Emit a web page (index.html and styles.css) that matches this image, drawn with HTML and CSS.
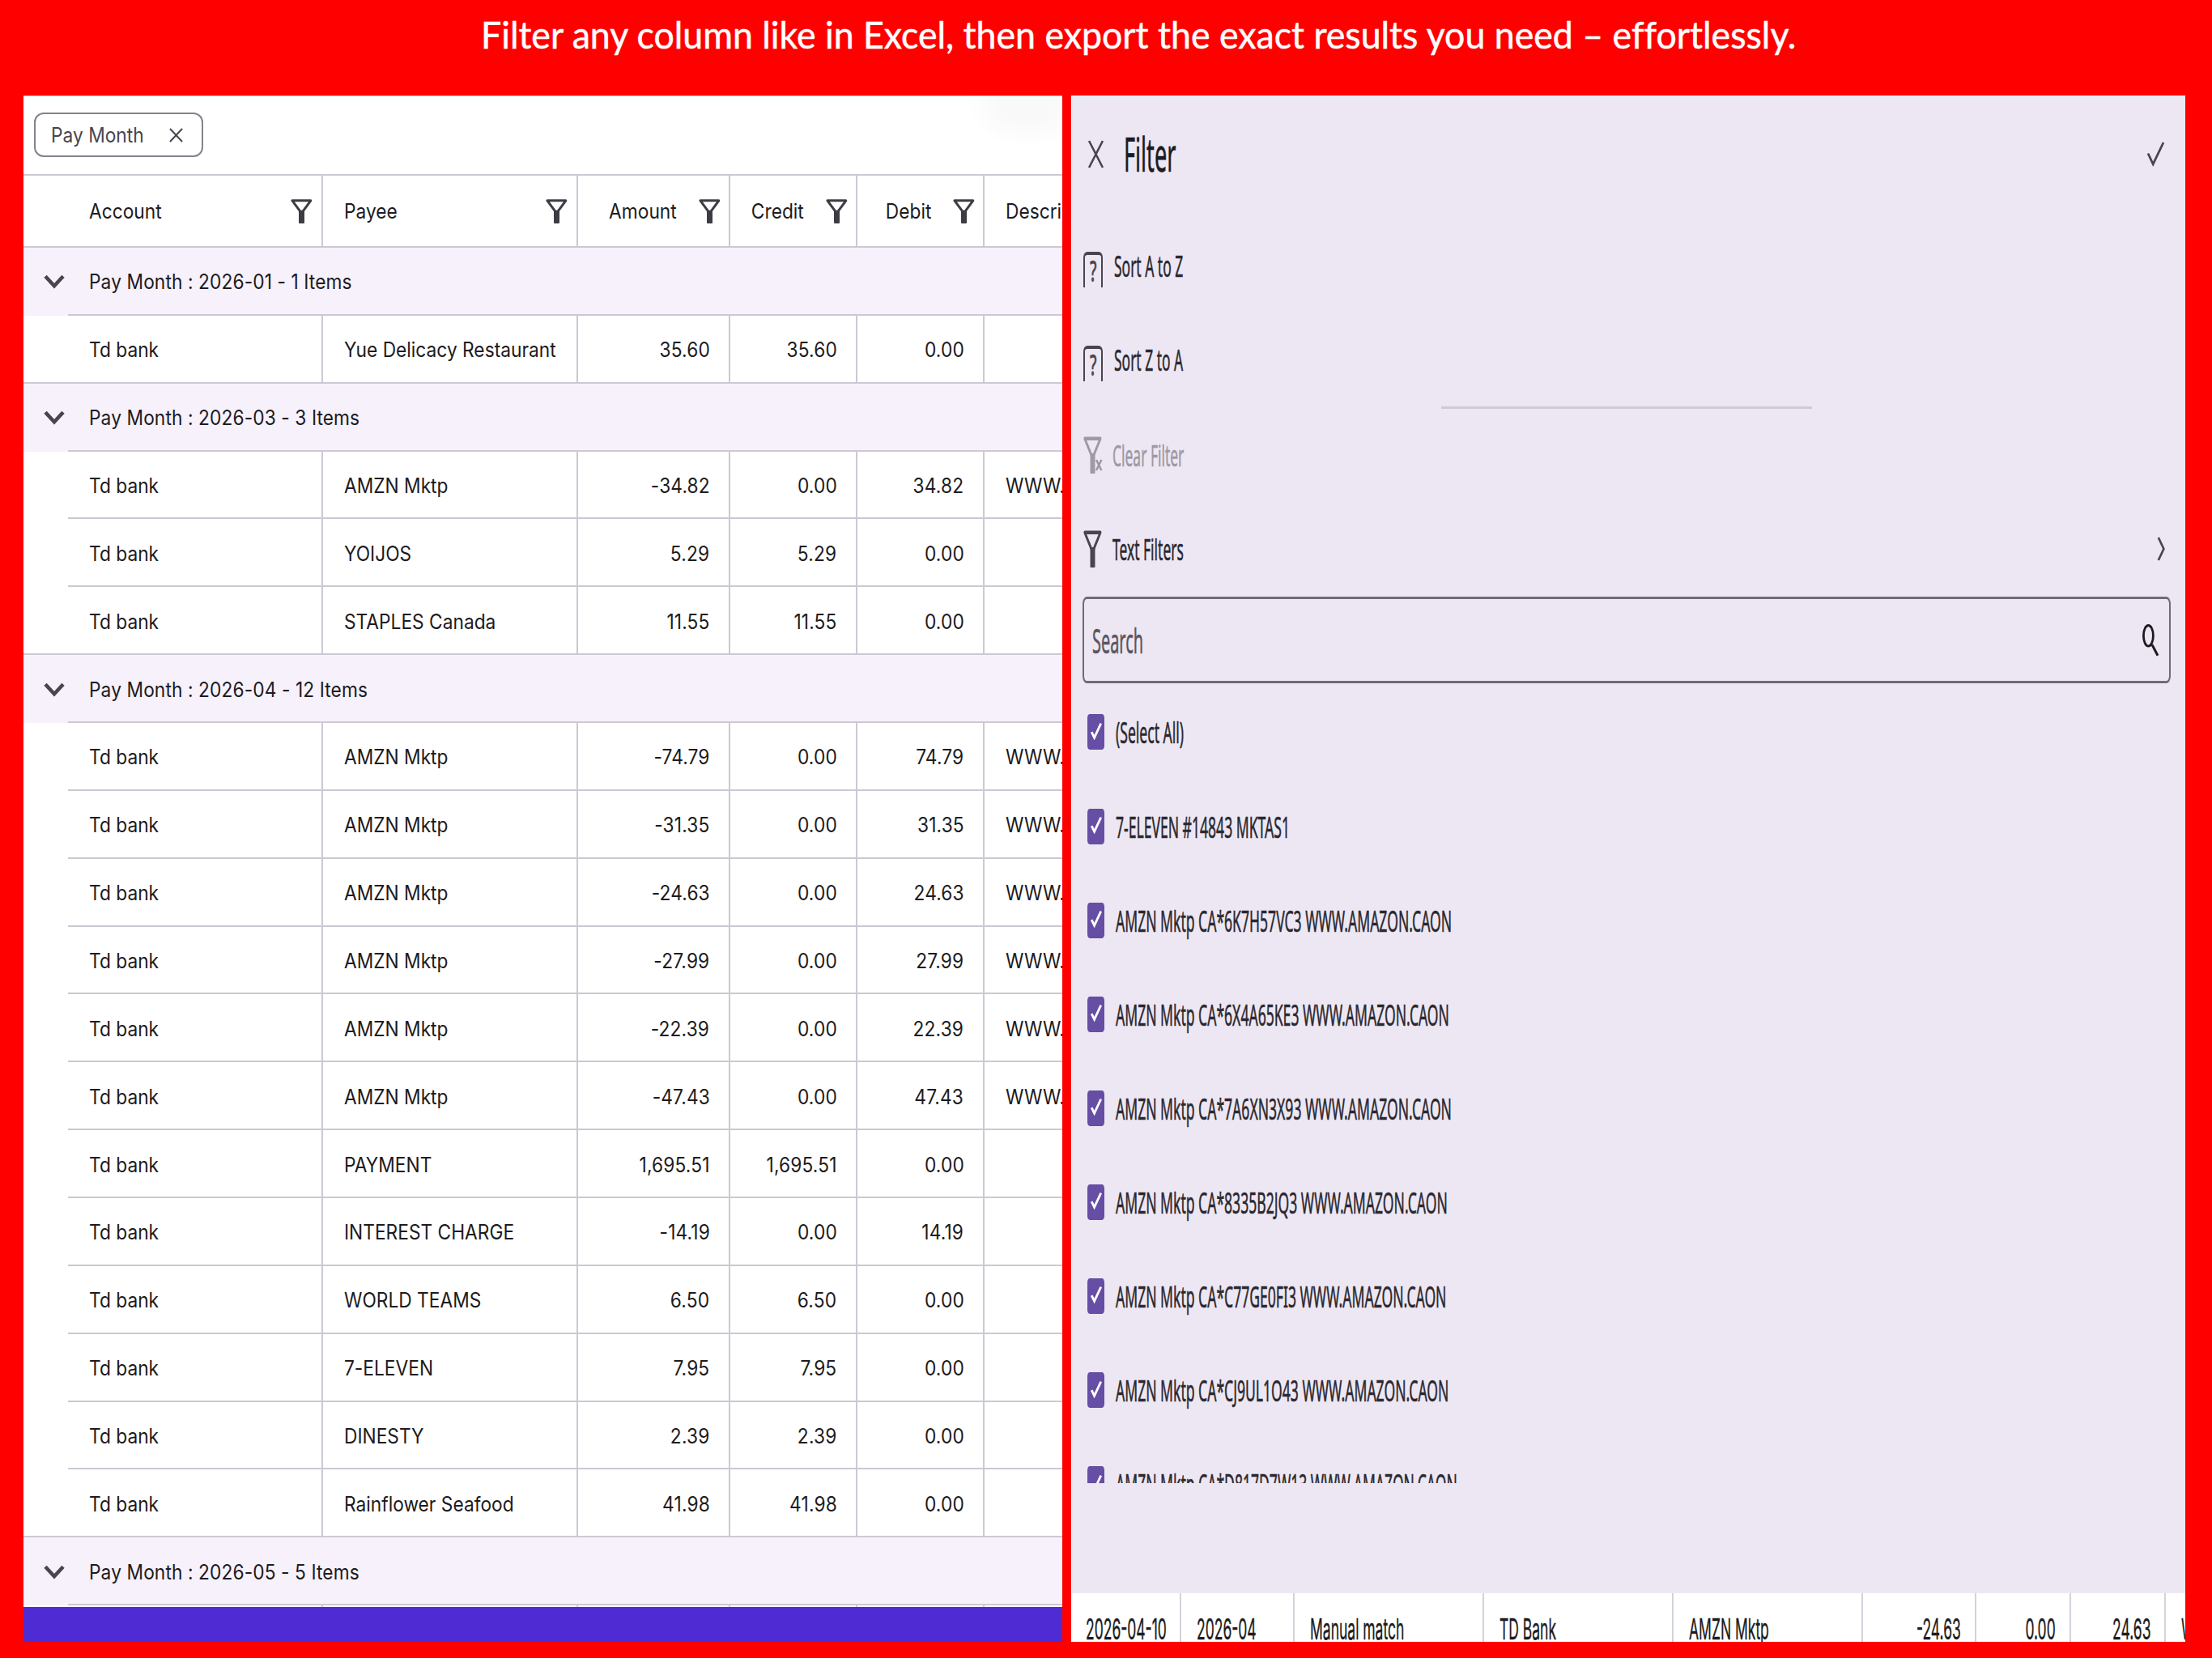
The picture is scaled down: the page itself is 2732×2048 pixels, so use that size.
FILE: index.html
```html
<!DOCTYPE html>
<html lang="en">
<head>
<meta charset="utf-8">
<title>Filter any column</title>
<link rel="stylesheet" href="styles.css">
</head>
<body>
<svg class="defs" aria-hidden="true">
  <symbol id="funnel" viewBox="0 0 27 30" preserveAspectRatio="none"><path d="M2 1.8H24.8L15 15.2H11.8Z" fill="none" stroke="currentColor" stroke-width="3" stroke-linejoin="round"/><path d="M10 14H17V29Q17 30 16 30H11Q10 30 10 29Z" fill="currentColor"/></symbol>
  <symbol id="close" viewBox="0 0 18 18" preserveAspectRatio="none"><path d="M1 1L17 17M17 1L1 17" fill="none" stroke="currentColor" vector-effect="non-scaling-stroke"/></symbol>
  <symbol id="down" viewBox="0 0 26 18"><path d="M2 2.2L13 14.2L24 2.2" fill="none" stroke="currentColor" stroke-width="4.6"/></symbol>
  <symbol id="tick" viewBox="0 0 14 22" preserveAspectRatio="none"><path d="M1.2 12.2L4.6 19.2L12.8 1.6" fill="none" stroke="#fff" stroke-width="2.8"/></symbol>
</svg>

<h1 class="headline"><span class="t">Filter any column like in Excel, then export the exact results you need – effortlessly.</span></h1>

<main class="stage">
  <section class="grid-panel">
    <div class="chips">
      <div class="chip"><span class="t">Pay Month</span><svg class="chip-x"><use href="#close"/></svg></div>
    </div>
    <div class="row head">
      <i class="gutter"></i>
      <div class="cell"><span class="t">Account</span><svg class="funnel"><use href="#funnel"/></svg></div>
      <div class="cell"><span class="t">Payee</span><svg class="funnel"><use href="#funnel"/></svg></div>
      <div class="cell num"><span class="t">Amount</span><svg class="funnel"><use href="#funnel"/></svg></div>
      <div class="cell num"><span class="t">Credit</span><svg class="funnel"><use href="#funnel"/></svg></div>
      <div class="cell num"><span class="t">Debit</span><svg class="funnel"><use href="#funnel"/></svg></div>
      <div class="cell"><span class="t">Descri</span></div>
    </div>

    <div class="group"><i class="gutter"><svg class="down"><use href="#down"/></svg></i><div class="cell"><span class="t">Pay Month : 2026-01 - 1 Items</span></div></div>
    <div class="row last"><i class="gutter"></i><div class="cell"><span class="t">Td bank</span></div><div class="cell"><span class="t">Yue Delicacy Restaurant</span></div><div class="cell num"><span class="t">35.60</span></div><div class="cell num"><span class="t">35.60</span></div><div class="cell num"><span class="t">0.00</span></div><div class="cell"></div></div>

    <div class="group"><i class="gutter"><svg class="down"><use href="#down"/></svg></i><div class="cell"><span class="t">Pay Month : 2026-03 - 3 Items</span></div></div>
    <div class="row"><i class="gutter"></i><div class="cell"><span class="t">Td bank</span></div><div class="cell"><span class="t">AMZN Mktp</span></div><div class="cell num"><span class="t">-34.82</span></div><div class="cell num"><span class="t">0.00</span></div><div class="cell num"><span class="t">34.82</span></div><div class="cell"><span class="t">WWW.</span></div></div>
    <div class="row"><i class="gutter"></i><div class="cell"><span class="t">Td bank</span></div><div class="cell"><span class="t">YOIJOS</span></div><div class="cell num"><span class="t">5.29</span></div><div class="cell num"><span class="t">5.29</span></div><div class="cell num"><span class="t">0.00</span></div><div class="cell"></div></div>
    <div class="row last"><i class="gutter"></i><div class="cell"><span class="t">Td bank</span></div><div class="cell"><span class="t">STAPLES Canada</span></div><div class="cell num"><span class="t">11.55</span></div><div class="cell num"><span class="t">11.55</span></div><div class="cell num"><span class="t">0.00</span></div><div class="cell"></div></div>

    <div class="group"><i class="gutter"><svg class="down"><use href="#down"/></svg></i><div class="cell"><span class="t">Pay Month : 2026-04 - 12 Items</span></div></div>
    <div class="row"><i class="gutter"></i><div class="cell"><span class="t">Td bank</span></div><div class="cell"><span class="t">AMZN Mktp</span></div><div class="cell num"><span class="t">-74.79</span></div><div class="cell num"><span class="t">0.00</span></div><div class="cell num"><span class="t">74.79</span></div><div class="cell"><span class="t">WWW.</span></div></div>
    <div class="row"><i class="gutter"></i><div class="cell"><span class="t">Td bank</span></div><div class="cell"><span class="t">AMZN Mktp</span></div><div class="cell num"><span class="t">-31.35</span></div><div class="cell num"><span class="t">0.00</span></div><div class="cell num"><span class="t">31.35</span></div><div class="cell"><span class="t">WWW.</span></div></div>
    <div class="row"><i class="gutter"></i><div class="cell"><span class="t">Td bank</span></div><div class="cell"><span class="t">AMZN Mktp</span></div><div class="cell num"><span class="t">-24.63</span></div><div class="cell num"><span class="t">0.00</span></div><div class="cell num"><span class="t">24.63</span></div><div class="cell"><span class="t">WWW.</span></div></div>
    <div class="row"><i class="gutter"></i><div class="cell"><span class="t">Td bank</span></div><div class="cell"><span class="t">AMZN Mktp</span></div><div class="cell num"><span class="t">-27.99</span></div><div class="cell num"><span class="t">0.00</span></div><div class="cell num"><span class="t">27.99</span></div><div class="cell"><span class="t">WWW.</span></div></div>
    <div class="row"><i class="gutter"></i><div class="cell"><span class="t">Td bank</span></div><div class="cell"><span class="t">AMZN Mktp</span></div><div class="cell num"><span class="t">-22.39</span></div><div class="cell num"><span class="t">0.00</span></div><div class="cell num"><span class="t">22.39</span></div><div class="cell"><span class="t">WWW.</span></div></div>
    <div class="row"><i class="gutter"></i><div class="cell"><span class="t">Td bank</span></div><div class="cell"><span class="t">AMZN Mktp</span></div><div class="cell num"><span class="t">-47.43</span></div><div class="cell num"><span class="t">0.00</span></div><div class="cell num"><span class="t">47.43</span></div><div class="cell"><span class="t">WWW.</span></div></div>
    <div class="row"><i class="gutter"></i><div class="cell"><span class="t">Td bank</span></div><div class="cell"><span class="t">PAYMENT</span></div><div class="cell num"><span class="t">1,695.51</span></div><div class="cell num"><span class="t">1,695.51</span></div><div class="cell num"><span class="t">0.00</span></div><div class="cell"></div></div>
    <div class="row"><i class="gutter"></i><div class="cell"><span class="t">Td bank</span></div><div class="cell"><span class="t">INTEREST CHARGE</span></div><div class="cell num"><span class="t">-14.19</span></div><div class="cell num"><span class="t">0.00</span></div><div class="cell num"><span class="t">14.19</span></div><div class="cell"></div></div>
    <div class="row"><i class="gutter"></i><div class="cell"><span class="t">Td bank</span></div><div class="cell"><span class="t">WORLD TEAMS</span></div><div class="cell num"><span class="t">6.50</span></div><div class="cell num"><span class="t">6.50</span></div><div class="cell num"><span class="t">0.00</span></div><div class="cell"></div></div>
    <div class="row"><i class="gutter"></i><div class="cell"><span class="t">Td bank</span></div><div class="cell"><span class="t">7-ELEVEN</span></div><div class="cell num"><span class="t">7.95</span></div><div class="cell num"><span class="t">7.95</span></div><div class="cell num"><span class="t">0.00</span></div><div class="cell"></div></div>
    <div class="row"><i class="gutter"></i><div class="cell"><span class="t">Td bank</span></div><div class="cell"><span class="t">DINESTY</span></div><div class="cell num"><span class="t">2.39</span></div><div class="cell num"><span class="t">2.39</span></div><div class="cell num"><span class="t">0.00</span></div><div class="cell"></div></div>
    <div class="row last"><i class="gutter"></i><div class="cell"><span class="t">Td bank</span></div><div class="cell"><span class="t">Rainflower Seafood</span></div><div class="cell num"><span class="t">41.98</span></div><div class="cell num"><span class="t">41.98</span></div><div class="cell num"><span class="t">0.00</span></div><div class="cell"></div></div>

    <div class="group"><i class="gutter"><svg class="down"><use href="#down"/></svg></i><div class="cell"><span class="t">Pay Month : 2026-05 - 5 Items</span></div></div>
    <div class="row cut"><i class="gutter"></i><div class="cell"></div><div class="cell"></div><div class="cell"></div><div class="cell"></div><div class="cell"></div><div class="cell"></div></div>
    <div class="navbar"></div>
  </section>

  <section class="filter-panel">
    <header class="filter-head">
      <svg class="filter-x"><use href="#close"/></svg>
      <h2><span class="t">Filter</span></h2>
      <svg class="apply" viewBox="0 0 21 30"><path d="M1 14.5L7.2 27.8L20 1" fill="none" stroke="currentColor" stroke-width="2.8"/></svg>
    </header>
    <div class="menu">
      <div class="item sort"><b class="missing"><span class="t">?</span></b><span class="t">Sort A to Z</span></div>
      <div class="item sort"><b class="missing"><span class="t">?</span></b><span class="t">Sort Z to A</span></div>
      <hr>
      <div class="item muted"><svg class="mfunnel" viewBox="0 0 23 46"><use href="#funnel" width="23" height="46"/><path d="M16 29L22.4 42M22.4 29L16 42" stroke="currentColor" stroke-width="2.6"/></svg><span class="t">Clear Filter</span></div>
      <div class="item"><svg class="mfunnel" viewBox="0 0 23 46"><use href="#funnel" width="23" height="46"/></svg><span class="t">Text Filters</span><svg class="next" viewBox="0 0 9 30"><path d="M.8 1L7.4 15L.8 29" fill="none" stroke="currentColor" stroke-width="2.7"/></svg></div>
    </div>
    <div class="search"><span class="t">Search</span><svg viewBox="0 0 20 40"><ellipse cx="7.4" cy="14.3" rx="6" ry="12.8" fill="none" stroke="currentColor" stroke-width="2.8"/><path d="M12 25.4L19 38.8" stroke="currentColor" stroke-width="3"/></svg></div>
    <div class="checks">
      <div class="check"><i class="box"><svg><use href="#tick"/></svg></i><span class="t">(Select All)</span></div>
      <div class="check"><i class="box"><svg><use href="#tick"/></svg></i><span class="t">7-ELEVEN #14843 MKTAS1</span></div>
      <div class="check"><i class="box"><svg><use href="#tick"/></svg></i><span class="t">AMZN Mktp CA*6K7H57VC3 WWW.AMAZON.CAON</span></div>
      <div class="check"><i class="box"><svg><use href="#tick"/></svg></i><span class="t">AMZN Mktp CA*6X4A65KE3 WWW.AMAZON.CAON</span></div>
      <div class="check"><i class="box"><svg><use href="#tick"/></svg></i><span class="t">AMZN Mktp CA*7A6XN3X93 WWW.AMAZON.CAON</span></div>
      <div class="check"><i class="box"><svg><use href="#tick"/></svg></i><span class="t">AMZN Mktp CA*8335B2JQ3 WWW.AMAZON.CAON</span></div>
      <div class="check"><i class="box"><svg><use href="#tick"/></svg></i><span class="t">AMZN Mktp CA*C77GE0FI3 WWW.AMAZON.CAON</span></div>
      <div class="check"><i class="box"><svg><use href="#tick"/></svg></i><span class="t">AMZN Mktp CA*CJ9UL1O43 WWW.AMAZON.CAON</span></div>
      <div class="check"><i class="box"><svg><use href="#tick"/></svg></i><span class="t">AMZN Mktp CA*D817D7W13 WWW.AMAZON.CAON</span></div>
    </div>
    <div class="peek">
      <div><span class="t">2026-04-10</span></div>
      <div><span class="t">2026-04</span></div>
      <div><span class="t">Manual match</span></div>
      <div><span class="t">TD Bank</span></div>
      <div><span class="t">AMZN Mktp</span></div>
      <div class="num"><span class="t">-24.63</span></div>
      <div class="num"><span class="t">0.00</span></div>
      <div class="num"><span class="t">24.63</span></div>
      <div><span class="t">W</span></div>
    </div>
  </section>
</main>
</body>
</html>
```
FILE: styles.css
```css
* { box-sizing: border-box; }

body {
  margin: 0;
  width: 2732px;
  height: 2048px;
  background: #f00;
  overflow: hidden;
}

svg { display: block; flex: none; overflow: visible; }
.defs { display: none; }

/* Condensed text: glyphs keep their height and are narrowed from one edge */
.t {
  display: inline-block;
  flex: none;
  white-space: nowrap;
  transform: scaleX(var(--sx));
  transform-origin: left center;
}
.num .t { transform-origin: right center; }

.headline {
  --sx: .95;
  margin: 0;
  height: 118px;
  padding: 12px 0 0 594px;
  color: #fff;
  font: 400 47px/60px Lato, sans-serif;
  font-variant-ligatures: none;
  -webkit-text-stroke: .5px #fff;
}

.stage {
  display: grid;
  grid-template-columns: 1283px 1376px;
  gap: 11px;
  height: 1910px;
  padding-left: 29px;
}

/* ---------- grouped table ---------- */
.grid-panel {
  --sx: .892;
  --line: #cdc8d3;
  display: flex;
  flex-direction: column;
  overflow: hidden;
  background: radial-gradient(ellipse 75px 52px at 1240px 12px, #f9f9f9 40%, #fff) no-repeat #fff;
  color: #1d1b20;
  font: 400 25.5px/32px Inter, sans-serif;
  font-feature-settings: "calt" 0;
}

.chips {
  flex: none;
  height: 98.5px;
  padding: 20px 0 0 13px;
  border-top: 1px solid #d5d3da;
  border-bottom: 2px solid var(--line);
}
.chip {
  display: flex;
  align-items: center;
  justify-content: space-between;
  width: 209px;
  height: 55px;
  padding: 0 23px 0 18.5px;
  border: 2px solid #85828b;
  border-radius: 12px;
  color: #49454f;
}
.chip-x { width: 17px; height: 18px; stroke-width: 2px; }
.chip .t { width: 120px; }

.row {
  flex: none;
  display: grid;
  grid-template-columns: 55px 315px 315px 188px 157px 157px 1fr;
  height: 83.87px;
}
.head { height: 89.5px; }
.group {
  flex: none;
  display: grid;
  grid-template-columns: 55px 1fr;
  height: 83.87px;
  background: #f6f1fb;
}
.group .gutter { display: flex; align-items: center; justify-content: center; padding: 1px 0 0 20px; color: #49454f; }
.down { width: 26px; height: 18px; }

.cell {
  display: flex;
  align-items: center;
  min-width: 0;
  padding: 3px 0 0 25.5px;
  border-right: 2px solid var(--line);
  border-bottom: 2px solid var(--line);
}
.cell:last-child { border-right: 0; overflow: hidden; }
.cell.num { justify-content: flex-end; padding: 3px 23.5px 0 0; }
.row:not(.head) .num { letter-spacing: .15px; }
.group .t { letter-spacing: .1px; }
.last .gutter, .head .gutter { border-bottom: 2px solid var(--line); }

.head .cell { justify-content: space-between; padding-top: 1px; padding-right: 11px; }
.head .cell.num { justify-content: flex-end; gap: 27px; padding-top: 1px; padding-right: 10px; }
.head .cell:last-child { padding-right: 0; }
.funnel { width: 27px; height: 30px; color: #3f3b45; }
.cut { flex: 1 1 0; height: auto; min-height: 0; }
.cut .cell { padding: 0; border-bottom: 0; }
.navbar { flex: none; height: 43px; background: #4f2bd3; }

/* ---------- filter sheet ---------- */
.filter-panel {
  --sx: .481;
  display: flex;
  flex-direction: column;
  overflow: hidden;
  border-top: 1px solid #fff;
  border-left: 1px solid #fff;
  background: #ede7f3;
  color: #2b282f;
  font: 400 36.5px/50px "Noto Sans", sans-serif;
  -webkit-text-stroke: .6px currentColor;
}

.filter-head {
  display: flex;
  align-items: center;
  height: 142.5px;
  margin-bottom: 8.5px;
  padding: 0 26px 0 20px;
  color: #49454f;
}
.filter-x { width: 19px; height: 37px; stroke-width: 2.6px; }
.filter-head h2 { margin: 0 auto 0 25px; font-size: 57.5px; line-height: 78px; font-weight: 400; color: #1d1b20; }
.filter-head .t { --sx: .472; }
.apply { width: 21px; height: 30px; }

.menu { --sx: .478; display: flex; flex-direction: column; }
.item {
  display: flex;
  align-items: center;
  height: 116.1px;
  padding: 0 25px 0 14px;
}
.menu hr {
  width: 458px;
  height: 3px;
  margin: 0 0 -1px 456px;
  border: 0;
  background: #d0cad6;
}
.missing {
  display: flex;
  justify-content: center;
  width: 24px;
  height: 44px;
  margin: 10px 14px 0 0;
  border: solid #49454f;
  border-width: 4px 2px 0;
  border-radius: 5px 5px 0 0 / 7px 7px 0 0;
  color: #49454f;
  font-weight: 500;
  line-height: 39px;
}
.missing .t { --sx: .52; transform-origin: center; }
.mfunnel { width: 23px; height: 46px; margin-right: 12.5px; color: #49454f; }
.muted, .muted .mfunnel { color: #9e99a5; }
.next { width: 9px; height: 30px; margin-left: auto; color: #49454f; }

.search {
  --sx: .474;
  flex: none;
  display: flex;
  align-items: center;
  justify-content: space-between;
  height: 106.5px;
  margin: 1px 18.5px 2.5px 13px;
  padding: 0 12.5px 0 9.5px;
  border: solid #6f6a76;
  border-width: 3px 2px;
  border-radius: 5px / 9px;
  font-size: 42px;
  color: #5a5661;
}
.search svg { width: 20px; height: 40px; color: #1d1b20; }

.checks { flex: none; height: 986px; overflow: hidden; }
.check { display: flex; align-items: center; height: 116.1px; padding-left: 19px; }
.check .t { margin-right: -500px; }
.box {
  flex: none;
  display: flex;
  align-items: center;
  justify-content: center;
  width: 21px;
  height: 44px;
  margin-right: 14px;
  border-radius: 3px / 5px;
  background: #654ea3;
}
.box svg { width: 14px; height: 22px; margin-top: -3px; }

.peek {
  --sx: .486;
  display: grid;
  grid-template-columns: 134.5px 140.5px 234px 234px 233.5px 140px 117px 117px 1fr;
  height: 60px;
  margin-top: auto;
  overflow: hidden;
  background: #fff;
  color: #1d1b20;
  font: 400 36px/44px Inter, sans-serif;
  -webkit-text-stroke: .4px currentColor;
}
.peek div { min-width: 0; padding: 22px 0 0 19px; border-right: 2px solid #d6d1db; }
.peek div:first-child { padding-left: 17px; }
.peek div:last-child { border-right: 0; }
.peek .num { display: flex; justify-content: flex-end; padding: 22px 16.5px 0 0; }
```
